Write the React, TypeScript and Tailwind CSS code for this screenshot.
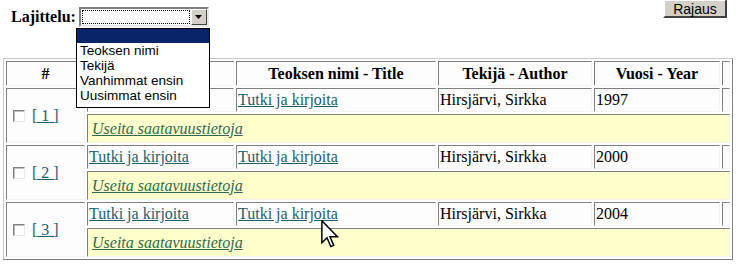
const rows = [
  { n: 1, year: "1997", covered: true },
  { n: 2, year: "2000", covered: false },
  { n: 3, year: "2004", covered: false },
];

const sortOptions = ["Teoksen nimi", "Tekijä", "Vanhimmat ensin", "Uusimmat ensin"];

function Checkbox() {
  return (
    <span className="inline-block w-[12px] h-[12px] border border-t-[#808080] border-l-[#808080] border-r-[#e8e8e8] border-b-[#e8e8e8] bg-white shadow-[inset_1px_1px_0_#c0c0c0]" />
  );
}

export default function App() {
  const cell =
    "border border-t-[#808080] border-l-[#808080] border-r-[#f4f4f4] border-b-[#f4f4f4] bg-[#fdfdfd] px-[1px] py-0 align-middle";
  const link = "text-[#1c5f6c] underline";

  return (
    <div className="relative w-[739px] h-[269px] bg-white overflow-hidden font-['Liberation_Serif','Times_New_Roman',serif] text-[16px] leading-[18px] text-black">
      {/* top bar */}
      <div className="flex justify-between items-start h-[27px]">
        <div className="flex items-center pt-[7px] pl-[11px] gap-[3px]">
          <span className="font-bold leading-[20px]">Lajittelu:</span>
          <div className="flex w-[130px] h-[20px] border-2 border-t-[#808080] border-l-[#808080] border-r-[#e8e8e8] border-b-[#e8e8e8] bg-white">
            <div className="flex-1 m-[1px] border border-dotted border-black" />
            <div className="w-[16px] bg-[#d4d0c8] border border-t-white border-l-white border-r-[#404040] border-b-[#404040] flex items-center justify-center">
              <svg width="7" height="4" viewBox="0 0 7 4">
                <path d="M0 0h7L3.5 4z" fill="#000" />
              </svg>
            </div>
          </div>
        </div>
        <button className="mr-[12px] w-[64px] h-[19px] -mt-[1px] bg-[#d4d0c8] border-2 border-t-white border-l-white border-r-[#404040] border-b-[#404040] font-['Liberation_Sans',Arial,sans-serif] text-[14px] leading-[14px] text-black">
          Rajaus
        </button>
      </div>

      {/* results table */}
      <table className="mt-[31px] ml-[3px] w-[730px] table-fixed border-separate border-spacing-[2px] border border-t-[#c8c8c8] border-l-[#c8c8c8] border-r-[#808080] border-b-[#808080]">
        <thead>
          <tr className="h-[25px]">
            <th className={`${cell} w-[79px] text-center`}>#</th>
            <th className={`${cell} w-[147px]`}></th>
            <th className={`${cell} w-[200px] text-center`}>Teoksen nimi - Title</th>
            <th className={`${cell} w-[154px] text-center`}>Tekijä - Author</th>
            <th className={`${cell} w-[126px] text-center`}>Vuosi - Year</th>
            <th className={`${cell} w-[8px]`}></th>
          </tr>
        </thead>
        <tbody>
          {rows.map((r) => (
            <>
              <tr key={`a${r.n}`} className="h-[24px]">
                <td rowSpan={2} className={cell}>
                  <div className="flex items-center pl-[5px] gap-[7px]">
                    <Checkbox />
                    <a className={link}>[ {r.n} ]</a>
                  </div>
                </td>
                <td className={`${cell} whitespace-nowrap`}>
                  {/* row 1 sits under the open list */}
                  {!r.covered && <a className={link}>Tutki ja kirjoita</a>}
                </td>
                <td className={`${cell} whitespace-nowrap`}>
                  <a className={link}>Tutki ja kirjoita</a>
                </td>
                <td className={`${cell} whitespace-nowrap`}>Hirsjärvi, Sirkka</td>
                <td className={cell}>{r.year}</td>
                <td className={cell}></td>
              </tr>
              <tr key={`b${r.n}`} className="h-[29px]">
                <td
                  colSpan={5}
                  className="border border-t-[#808080] border-l-[#808080] border-r-[#f4f4f4] border-b-[#f4f4f4] bg-[#ffffcc] px-[4px] py-0 align-middle"
                >
                  <a className="italic underline text-[#2f6a52]">Useita saatavuustietoja</a>
                </td>
              </tr>
            </>
          ))}
        </tbody>
      </table>

      {/* open select list */}
      <div className="absolute z-10 left-[76px] top-[28px] w-[134px] h-[80px] bg-white border border-black font-['Liberation_Sans',Arial,sans-serif] text-[13.5px] leading-[15px]">
        <div className="h-[14px] bg-[#0a246a]" />
        {sortOptions.map((o) => (
          <div key={o} className="h-[15px] px-[3px] text-black whitespace-nowrap">
            {o}
          </div>
        ))}
      </div>

      {/* mouse pointer */}
      <svg
        className="absolute z-10 left-[321px] top-[220px]"
        width="18"
        height="28"
        viewBox="0 0 12 19"
      >
        <path
          d="M0.5 0.5 L0.5 15.5 L4 12 L6.5 18 L8.5 17.2 L6 11.3 L11 11.3 Z"
          fill="#fff"
          stroke="#000"
          strokeWidth="1"
          strokeLinejoin="miter"
        />
      </svg>
    </div>
  );
}
